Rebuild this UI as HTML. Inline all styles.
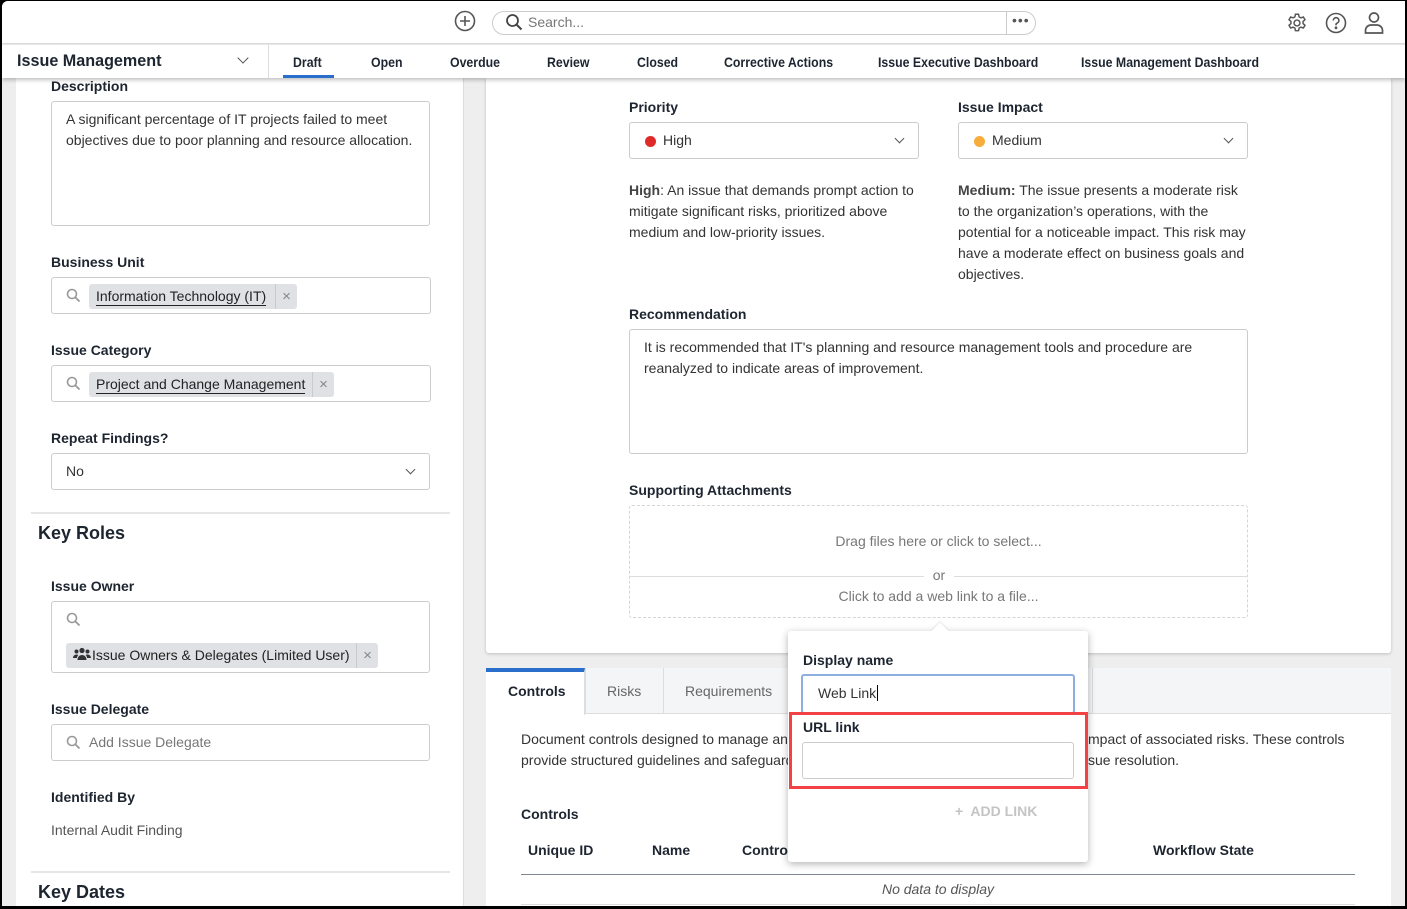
<!DOCTYPE html>
<html><head><meta charset="utf-8"><style>
*{box-sizing:border-box;margin:0;padding:0}
body{width:1407px;height:909px;overflow:hidden;background:#000;font-family:"Liberation Sans",sans-serif;color:#222;font-size:14px;position:relative}
.a{position:absolute}
#app{position:absolute;left:2px;top:1px;width:1403px;height:905px;background:#eee;overflow:hidden;border-radius:6px 0 0 0}
.lbl{position:absolute;font-weight:bold;font-size:14px;color:#1d2530}
.box{position:absolute;border:1px solid #ccc;border-radius:3px;background:#fff}
.txt{position:absolute;font-size:14px;color:#333;line-height:21px}
.tag{position:absolute;background:#dfe1e4;border-radius:3px;height:25px;font-size:14px;line-height:25px;color:#222}
.tag u{text-decoration:none;border-bottom:1px solid #222;padding-bottom:1px}
.tag .x{position:absolute;right:0;top:0;width:22px;height:25px;border-left:1px solid #c8cacd;text-align:center;color:#888;font-size:15px}
.nav span{position:absolute;top:53px;font-size:14px;color:#1d2530;font-weight:bold;transform:scaleX(.88);transform-origin:left;white-space:nowrap}
.chev{position:absolute;width:8px;height:8px;border-right:1.5px solid #555;border-bottom:1.5px solid #555;transform:rotate(45deg)}
</style></head><body><div id="app">
<div class="a" style="left:0;top:0;width:1403px;height:43px;background:#fff;border-bottom:1px solid #ddd"></div>
<svg class="a" style="left:452px;top:9px" width="22" height="22" viewBox="0 0 22 22"><circle cx="11" cy="11" r="9.5" fill="none" stroke="#555" stroke-width="1.6"/><path d="M11 6v10M6 11h10" stroke="#555" stroke-width="1.6"/></svg>
<div class="a" style="left:490px;top:10px;width:544px;height:24px;border:1px solid #ccc;border-radius:12px;background:#fff"></div>
<div class="a" style="left:1004px;top:10px;width:1px;height:24px;background:#ccc"></div>
<svg class="a" style="left:503px;top:12px" width="18" height="18" viewBox="0 0 18 18"><circle cx="7.5" cy="7.5" r="5.5" fill="none" stroke="#444" stroke-width="1.8"/><path d="M11.5 11.5l5 5" stroke="#444" stroke-width="2"/></svg>
<div class="a" style="left:526px;top:13px;font-size:14px;color:#777">Search...</div>
<div class="a" style="left:1010px;top:11px;font-size:14px;color:#555;letter-spacing:1px">•••</div>
<svg class="a" style="left:1284px;top:11px" width="22" height="22" viewBox="0 0 24 24" fill="none" stroke="#555" stroke-width="1.6"><circle cx="12" cy="12" r="3.2"/><path d="M10.3 2.5h3.4l.6 2.8 2 1.1 2.7-.9 1.7 2.9-2.1 1.9v2.3l2.1 1.9-1.7 2.9-2.7-.9-2 1.1-.6 2.8h-3.4l-.6-2.8-2-1.1-2.7.9-1.7-2.9 2.1-1.900v-2.3L3.3 8.4 5 5.5l2.7.9 2-1.1z"/></svg>
<svg class="a" style="left:1323px;top:11px" width="22" height="22" viewBox="0 0 22 22" fill="none" stroke="#555" stroke-width="1.6"><circle cx="11" cy="11" r="9.5"/><path d="M8.3 8.5a2.8 2.8 0 1 1 3.8 2.6c-.8.3-1.1.8-1.1 1.6v.6"/><circle cx="11" cy="15.8" r=".6" fill="#555"/></svg>
<svg class="a" style="left:1362px;top:10px" width="20" height="24" viewBox="0 0 20 24" fill="none" stroke="#555" stroke-width="1.7"><circle cx="10" cy="6.5" r="4.5"/><path d="M1.5 22v-2.5c0-3 2.5-5.5 5.5-5.5h6c3 0 5.5 2.5 5.5 5.5V22z"/></svg>
<div class="a" style="left:0;top:44px;width:1403px;height:33px;background:#fff;box-shadow:0 2px 4px rgba(0,0,0,.25);z-index:5" >
<div class="a" style="left:266px;top:0;width:1px;height:33px;background:#ddd"></div>
<div class="a" style="left:15px;top:6px;font-size:17px;font-weight:bold;color:#1d2530;transform:scaleX(.95);transform-origin:left;white-space:nowrap">Issue Management</div>
<div class="chev" style="left:237px;top:9px"></div>
<div class="a" style="left:281px;top:30px;width:51px;height:3px;background:#2a6ecb"></div>
</div>
<div class="nav" style="position:absolute;left:0;top:0;z-index:6">
<span style="left:291px">Draft</span><span style="left:369px">Open</span><span style="left:448px">Overdue</span><span style="left:545px">Review</span><span style="left:635px">Closed</span><span style="left:722px">Corrective Actions</span><span style="left:876px">Issue Executive Dashboard</span><span style="left:1079px">Issue Management Dashboard</span>
</div>
<div class="a" style="left:14px;top:77px;width:448px;height:840px;background:#fff;border-right:1px solid #ddd"></div>
<div class="lbl" style="left:49px;top:77px">Description</div>
<div class="box" style="left:49px;top:100px;width:379px;height:125px"></div>
<div class="txt" style="left:64px;top:108px;width:360px">A significant percentage of IT projects failed to meet objectives due to poor planning and resource allocation.</div>
<div class="lbl" style="left:49px;top:253px">Business Unit</div>
<div class="box" style="left:49px;top:276px;width:380px;height:37px"></div>
<svg class="a" style="left:64px;top:287px" width="15" height="15" viewBox="0 0 15 15"><circle cx="6" cy="6" r="4.5" fill="none" stroke="#999" stroke-width="1.6"/><path d="M9.5 9.5l4 4" stroke="#999" stroke-width="1.8"/></svg>
<div class="tag" style="left:87px;top:283px;width:208px;padding-left:7px"><u>Information Technology (IT)</u><span class="x">×</span></div>
<div class="lbl" style="left:49px;top:341px">Issue Category</div>
<div class="box" style="left:49px;top:364px;width:380px;height:37px"></div>
<svg class="a" style="left:64px;top:375px" width="15" height="15" viewBox="0 0 15 15"><circle cx="6" cy="6" r="4.5" fill="none" stroke="#999" stroke-width="1.6"/><path d="M9.5 9.5l4 4" stroke="#999" stroke-width="1.8"/></svg>
<div class="tag" style="left:87px;top:371px;width:245px;padding-left:7px"><u>Project and Change Management</u><span class="x">×</span></div>
<div class="lbl" style="left:49px;top:429px">Repeat Findings?</div>
<div class="box" style="left:49px;top:452px;width:379px;height:37px"></div>
<div class="txt" style="left:64px;top:460px">No</div>
<div class="chev" style="left:405px;top:465px;width:7px;height:7px"></div>
<div class="a" style="left:29px;top:511px;width:419px;height:2px;background:#e6e6e6"></div>
<div class="a" style="left:36px;top:522px;font-size:18px;font-weight:bold;color:#1d2530">Key Roles</div>
<div class="lbl" style="left:49px;top:577px">Issue Owner</div>
<div class="box" style="left:49px;top:600px;width:379px;height:72px"></div>
<svg class="a" style="left:64px;top:611px" width="15" height="15" viewBox="0 0 15 15"><circle cx="6" cy="6" r="4.5" fill="none" stroke="#999" stroke-width="1.6"/><path d="M9.5 9.5l4 4" stroke="#999" stroke-width="1.8"/></svg>
<div class="tag" style="left:64px;top:642px;width:312px;padding-left:26px">Issue Owners &amp; Delegates (Limited User)<span class="x">×</span></div>
<svg class="a" style="left:71px;top:646px" width="18" height="14" viewBox="0 0 18 14" fill="#333"><circle cx="9" cy="3.5" r="2.6"/><circle cx="3.5" cy="4.5" r="2"/><circle cx="14.5" cy="4.5" r="2"/><path d="M4.5 13c0-3 2-5 4.5-5s4.5 2 4.5 5zM0 11c0-2 1.5-3.5 3.5-3.5 1 0 1.5.3 1.8.6-1 1-1.3 2-1.3 2.9zM18 11c0-2-1.5-3.5-3.5-3.5-1 0-1.5.3-1.8.6 1 1 1.3 2 1.3 2.9z"/></svg>
<div class="lbl" style="left:49px;top:700px">Issue Delegate</div>
<div class="box" style="left:49px;top:723px;width:379px;height:37px"></div>
<svg class="a" style="left:64px;top:734px" width="15" height="15" viewBox="0 0 15 15"><circle cx="6" cy="6" r="4.5" fill="none" stroke="#999" stroke-width="1.6"/><path d="M9.5 9.5l4 4" stroke="#999" stroke-width="1.8"/></svg>
<div class="txt" style="left:87px;top:731px;color:#777">Add Issue Delegate</div>
<div class="lbl" style="left:49px;top:788px">Identified By</div>
<div class="txt" style="left:49px;top:819px;color:#555">Internal Audit Finding</div>
<div class="a" style="left:29px;top:870px;width:419px;height:2px;background:#e6e6e6"></div>
<div class="a" style="left:36px;top:881px;font-size:18px;font-weight:bold;color:#1d2530">Key Dates</div>
<div class="a" style="left:484px;top:77px;width:905px;height:575px;background:#fff;border-radius:0 0 3px 3px;box-shadow:0 1px 3px rgba(0,0,0,.2)"></div>
<div class="lbl" style="left:627px;top:98px">Priority</div>
<div class="box" style="left:627px;top:121px;width:290px;height:37px"></div>
<div class="a" style="left:643px;top:135px;width:11px;height:11px;border-radius:50%;background:#e02a2a"></div>
<div class="txt" style="left:661px;top:129px">High</div>
<div class="chev" style="left:894px;top:134px;width:7px;height:7px"></div>
<div class="lbl" style="left:956px;top:98px">Issue Impact</div>
<div class="box" style="left:956px;top:121px;width:290px;height:37px"></div>
<div class="a" style="left:972px;top:135px;width:11px;height:11px;border-radius:50%;background:#f6ad3c"></div>
<div class="txt" style="left:990px;top:129px">Medium</div>
<div class="chev" style="left:1223px;top:134px;width:7px;height:7px"></div>
<div class="txt" style="left:627px;top:179px;width:300px"><b style="color:#444;font-weight:600">High</b>: An issue that demands prompt action to mitigate significant risks, prioritized above medium and low-priority issues.</div>
<div class="txt" style="left:956px;top:179px;width:295px"><b style="color:#444;font-weight:600">Medium:</b> The issue presents a moderate risk to the organization’s operations, with the potential for a noticeable impact. This risk may have a moderate effect on business goals and objectives.</div>
<div class="lbl" style="left:627px;top:305px">Recommendation</div>
<div class="box" style="left:627px;top:328px;width:619px;height:125px"></div>
<div class="txt" style="left:642px;top:336px;width:590px">It is recommended that IT's planning and resource management tools and procedure are reanalyzed to indicate areas of improvement.</div>
<div class="lbl" style="left:627px;top:481px">Supporting Attachments</div>
<div class="a" style="left:627px;top:504px;width:619px;height:113px;border:1px dashed #d4d4d4;border-radius:3px"></div>
<div class="a" style="left:627px;top:575px;width:619px;height:1px;background:#ddd"></div>
<div class="a" style="left:922px;top:566px;width:30px;height:18px;background:#fff;text-align:center;color:#777;font-size:14px">or</div>
<div class="txt" style="left:627px;top:530px;width:619px;text-align:center;color:#777">Drag files here or click to select...</div>
<div class="txt" style="left:627px;top:585px;width:619px;text-align:center;color:#777">Click to add a web link to a file...</div>
<div class="a" style="left:484px;top:667px;width:905px;height:245px;background:#f4f5f7"></div>
<div class="a" style="left:484px;top:712px;width:905px;height:200px;background:#fff;border-top:1px solid #ddd"></div>
<div class="a" style="left:484px;top:667px;width:99px;height:47px;background:#fff;border-top:4px solid #2a6ecb;border-right:1px solid #ddd"></div>
<div class="a" style="left:583px;top:667px;width:1px;height:46px;background:#ddd"></div>
<div class="a" style="left:661px;top:667px;width:1px;height:46px;background:#ddd"></div>
<div class="a" style="left:1090px;top:667px;width:1px;height:46px;background:#ddd"></div>
<div class="a" style="left:506px;top:682px;font-weight:bold;color:#1d2530">Controls</div>
<div class="a" style="left:605px;top:682px;color:#666">Risks</div>
<div class="a" style="left:683px;top:682px;color:#666">Requirements</div>
<div class="txt" style="left:519px;top:728px;white-space:nowrap">Document controls designed to manage and reduce the likelihood</div>
<div class="txt" style="left:519px;top:749px;white-space:nowrap">provide structured guidelines and safeguards that support</div>
<div class="txt" style="left:1086px;top:728px;white-space:nowrap">mpact of associated risks. These controls</div>
<div class="txt" style="left:1086px;top:749px;white-space:nowrap">sue resolution.</div>
<div class="lbl" style="left:519px;top:805px">Controls</div>
<div class="lbl" style="left:526px;top:841px">Unique ID</div>
<div class="lbl" style="left:650px;top:841px">Name</div>
<div class="lbl" style="left:740px;top:841px">Control</div>
<div class="lbl" style="left:1151px;top:841px">Workflow State</div>
<div class="a" style="left:519px;top:873px;width:834px;height:1px;background:#7d8690"></div>
<div class="a" style="left:519px;top:880px;width:834px;text-align:center;font-style:italic;color:#555;font-size:14px">No data to display</div>
<div class="a" style="left:519px;top:903px;width:834px;height:1px;background:#ddd"></div>
<div class="a" style="left:786px;top:630px;width:300px;height:231px;background:#fff;border-radius:3px;box-shadow:0 2px 8px rgba(0,0,0,.3);z-index:8"></div>
<div class="a" style="left:932px;top:624px;width:12px;height:12px;background:#fff;transform:rotate(45deg);z-index:8;box-shadow:-1px -1px 2px rgba(0,0,0,.1)"></div>
<div class="lbl" style="left:801px;top:651px;z-index:9">Display name</div>
<div class="a" style="left:799px;top:673px;width:274px;height:40px;border:2px solid #8eaee0;border-radius:3px;background:#fff;z-index:9"></div>
<div class="txt" style="left:816px;top:682px;z-index:10">Web Link<span style="border-left:1px solid #000;margin-left:1px"></span></div>
<div class="a" style="left:787px;top:711px;width:299px;height:77px;border:3px solid #f24246;z-index:11"></div>
<div class="lbl" style="left:801px;top:718px;z-index:10">URL link</div>
<div class="box" style="left:800px;top:741px;width:272px;height:37px;z-index:10"></div>
<div class="a" style="left:953px;top:802px;color:#c4c4c4;font-weight:bold;font-size:14px;z-index:10">+&nbsp; ADD LINK</div>
</div></body></html>
